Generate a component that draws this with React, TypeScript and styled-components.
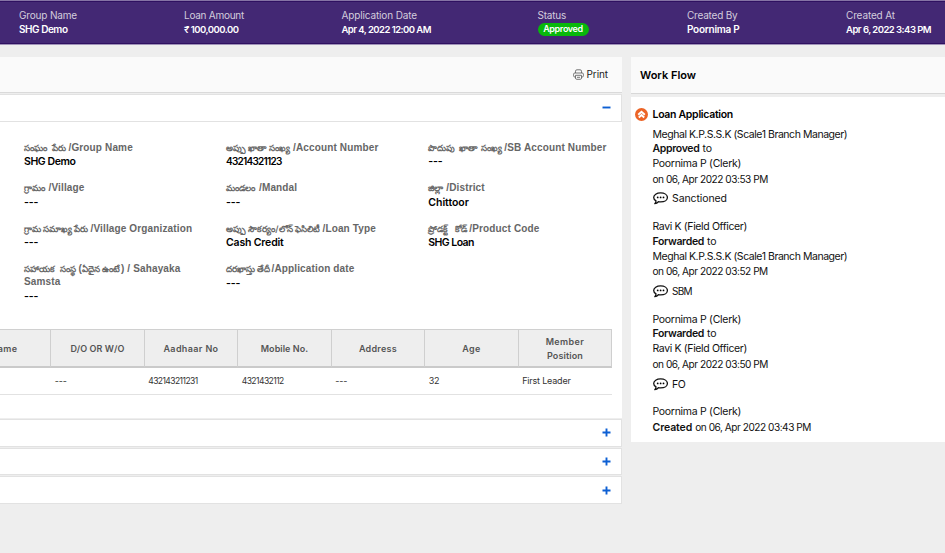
import React from 'react';
import styled, { createGlobalStyle } from 'styled-components';

const GlobalStyle = createGlobalStyle`
  * { box-sizing: border-box; }
  html, body { margin: 0; height: 100%; overflow: hidden; background: #eeeeee; }
  body { font-family: Inter, "Noto Sans", sans-serif; color: #111; }
`;

const Page = styled.div`
  width: 945px;
  height: 553px;
  overflow: hidden;
  background: #eeeeee;
`;

const Text = styled.span<{ $size?: number; $weight?: number; $spacing?: number; $color?: string }>`
  font-size: ${p => p.$size ?? 10}px;
  font-weight: ${p => p.$weight ?? 400};
  letter-spacing: ${p => p.$spacing ?? 0}px;
  color: ${p => p.$color ?? 'inherit'};
  white-space: nowrap;
`;

/* Summary header */
const Summary = styled.header`
  height: 45px;
  background: #432874;
  border-top: 1px solid #8573a5;
  border-bottom: 1px solid #a093b8;
  box-shadow: inset 0 1px #2f1061, inset 0 -1px #2f1061;
  display: grid;
  grid-template-columns: 165px 157.5px 196px 149.5px 159px 1fr;
  padding: 8px 0 0 19px;
  color: #fff;
`;

const SummaryItem = styled.div`
  display: flex;
  flex-direction: column;
  align-items: flex-start;
  line-height: 13.5px;
`;

const StatusPill = styled.span`
  height: 13px;
  width: 51px;
  border-radius: 7px;
  background: #08b80b;
  display: flex;
  align-items: center;
  justify-content: center;
`;

/* Columns */
const Columns = styled.div`
  display: flex;
  align-items: flex-start;
  gap: 9px;
  padding-top: 12px;
`;

const Main = styled.main`
  width: 622px;
`;

const Toolbar = styled.div`
  height: 36px;
  background: #fafafa;
  border-bottom: 1px solid #dadada;
  display: flex;
  align-items: center;
  justify-content: flex-end;
  gap: 2px;
  padding: 0 14px 1px 0;
  color: #222;
`;

const AccordionHead = styled.div`
  height: 27.7px;
  margin-top: 1px;
  background: #fff;
  border: 1px solid #e2e2e2;
  border-left: 0;
  display: flex;
  align-items: center;
  justify-content: flex-end;
  padding-right: 10px;
`;

const AccordionBody = styled.section`
  height: 296.3px;
  background: #fff;
  padding-top: 19.3px;
`;

const Fields = styled.div`
  display: grid;
  grid-template-columns: 202px 202.3px 190px;
  grid-auto-rows: 40.5px;
  padding-left: 24px;
  height: 188px;
`;

const Label = styled.div`
  font: bold 10px/13px "Liberation Sans", "Noto Sans", sans-serif;
  letter-spacing: 0.14px;
  color: #666;
  white-space: nowrap;
`;

const Telugu = styled.span<{ $width: number }>`
  display: inline-block;
  width: ${p => p.$width}px;
  padding-right: 2.5px;
  font-family: Inter, sans-serif;
  font-size: 8.7px;
  font-weight: 600;
  line-height: 12px;
  letter-spacing: 0;
  text-align-last: justify;
`;

const Value = styled.div`
  height: 15px;
  line-height: 15px;
  margin-top: 0.3px;
  color: #000;
  display: flex;
`;

/* Members table */
const Table = styled.div`
  display: grid;
  grid-template-columns: repeat(7, 93.5px);
  width: 655px;
  margin-left: -42.3px;
`;

const TableWrap = styled.div`
  overflow: hidden;
`;

const HeadCell = styled.div`
  height: 39px;
  background: #eee;
  border-top: 1px solid #d0d0d0;
  border-right: 1px solid #cfcfcf;
  border-bottom: 2px solid #cacaca;
  display: flex;
  flex-direction: column;
  align-items: center;
  justify-content: center;
  padding-top: 2px;
  line-height: 14px;
  color: #555;
`;

const Cell = styled.div`
  height: 27px;
  border-bottom: 1px solid #e2e2e2;
  padding-left: 3.5px;
  line-height: 21px;
  color: #333;
`;

/* Workflow */
const Side = styled.aside`
  width: 314px;
`;

const SideHead = styled.div`
  height: 37px;
  background: #fafafa;
  border-bottom: 1px solid #d8d8d8;
  padding-left: 9px;
  line-height: 33px;
  color: #000;
`;

const SideBody = styled.section`
  height: 345px;
  margin-top: 3px;
  background: #fff;
  padding-top: 10px;
`;

const FlowTitle = styled.div`
  display: flex;
  align-items: center;
  gap: 4.5px;
  height: 15px;
  padding-left: 4px;
  color: #000;
`;

const Steps = styled.div`
  padding-top: 5.7px;
`;

const Step = styled.div`
  padding: 0 0 14.3px 21.5px;
`;

const Line = styled.div`
  height: 14.7px;
  line-height: 14.7px;
  display: flex;
  align-items: baseline;
  gap: 3px;
`;

const Comment = styled.div`
  display: flex;
  align-items: center;
  gap: 4.5px;
  height: 14px;
  margin-top: 5.5px;
`;

const PrinterIcon = () => (
  <svg width="11" height="11" viewBox="0 0 11 11" fill="none" stroke="#666" strokeWidth="0.9">
    <path d="M2.5 4V2.2Q2.5.8 3.9.8H7.1Q8.5.8 8.5 2.2V4M2.5 8H1.8Q.6 8 .6 6.8V5.2Q.6 4 1.8 4H9.2Q10.4 4 10.4 5.2V6.8Q10.4 8 9.2 8H8.5M2.5 6.3H8.5V9.1Q8.5 10.3 7.3 10.3H3.7Q2.5 10.3 2.5 9.1ZM4 8.3H7" />
  </svg>
);

const ToggleIcon = ({ open }: { open?: boolean }) => (
  <svg width="9" height="9" viewBox="0 0 9 9" stroke="#0d5fd3" strokeWidth="1.9">
    <path d={open ? 'M.5 4.5H8.5' : 'M.5 4.5H8.5M4.5.5V8.5'} />
  </svg>
);

const FlowIcon = () => (
  <svg width="13" height="13" viewBox="0 0 13 13">
    <circle cx="6.5" cy="6.5" r="6.5" fill="#ec6426" />
    <path d="M3.2 6.7 6.5 3.8 9.8 6.7M3.8 9.5 6.5 7.1 9.2 9.5" fill="none" stroke="#fff" strokeWidth="1.9" />
  </svg>
);

const CommentIcon = () => (
  <svg width="15" height="13" viewBox="0 0 15 13">
    <path d="M3 8.9Q.7 7.5.7 5.4C.7 2.8 3.7.9 7.6.9S14.4 2.8 14.4 5.4 11.5 9.9 7.6 9.9Q6.4 9.9 5.4 9.7 3.9 11.4 1.8 11.6 3 10.3 3 8.9Z" fill="#fff" stroke="#111" strokeWidth="1.3" strokeLinejoin="round" />
    <circle cx="4.7" cy="5.4" r=".9" />
    <circle cx="7.6" cy="5.4" r=".9" />
    <circle cx="10.5" cy="5.4" r=".9" />
  </svg>
);

type Piece = { text: string; ls: number; size?: number; bold?: boolean };

const summary: { label: string; ls: number; value: string; vls: number; size?: number; pill?: boolean }[] = [
  { label: 'Group Name', ls: -0.17, value: 'SHG Demo', vls: -0.46 },
  { label: 'Loan Amount', ls: -0.26, value: '₹ 100,000.00', vls: -0.5, size: 9.5 },
  { label: 'Application Date', ls: -0.14, value: 'Apr 4, 2022 12:00 AM', vls: -0.54, size: 9.5 },
  { label: 'Status', ls: -0.22, value: 'Approved', vls: -0.35, size: 9, pill: true },
  { label: 'Created By', ls: -0.21, value: 'Poornima P', vls: -0.26 },
  { label: 'Created At', ls: -0.14, value: 'Apr 6, 2022 3:43 PM', vls: -0.53, size: 9.5 },
];

type Field = { te: [string, number][]; en: string[]; value?: Piece };
const fields: Field[] = [
  { te: [['సంఘం పేరు', 44.5]], en: ['/Group Name'], value: { text: 'SHG Demo', ls: -0.41 } },
  { te: [['అప్పు ఖాతా సంఖ్య', 67]], en: ['/Account Number'], value: { text: '43214321123', ls: -0.75, size: 10 } },
  { te: [['పొదుపు ఖాతా సంఖ్య', 76]], en: ['/SB Account Number'] },
  { te: [['గ్రామం', 24.5]], en: ['/Village'] },
  { te: [['మండలం', 33]], en: ['/Mandal'] },
  { te: [['జిల్లా', 18]], en: ['/District'], value: { text: 'Chittoor', ls: -0.04 } },
  { te: [['గ్రామ సమాఖ్య పేరు', 66.5]], en: ['/Village Organization'] },
  { te: [['అప్పు సౌకర్యం/లోన్ ఫెసిలిటీ', 96.5]], en: ['/Loan Type'], value: { text: 'Cash Credit', ls: -0.17 } },
  { te: [['ప్రోడక్ట్ కోడ్', 41]], en: ['/Product Code'], value: { text: 'SHG Loan', ls: -0.55 } },
  { te: [['సహాయక సంస్థ', 54.5], ['ఏదైన ఉంటే', 39]], en: ['(', ') / Sahayaka', 'Samsta'] },
  { te: [['దరఖాస్తు తేదీ', 45.5]], en: ['/Application date'] },
];

const heads: [string, number][][] = [
  [['Name', 0.3]],
  [['D/O OR W/O', 0.09]],
  [['Aadhaar No', 0.37]],
  [['Mobile No.', 0.05]],
  [['Address', 0.25]],
  [['Age', 0.38]],
  [['Member', 0.38], ['Position', 0.12]],
];

const cells: [string, number, number?][] = [
  ['', 0],
  ['---', -0.14],
  ['432143211231', -0.56, 8.5],
  ['4321432112', -0.54, 8.5],
  ['---', -0.14],
  ['32', -0.25],
  ['First Leader', -0.19],
];

const b = (text: string, ls: number): Piece => ({ text, ls, bold: true });
const t = (text: string, ls: number, size?: number): Piece => ({ text, ls, size });
const meghal = t('Meghal K.P.S.S.K (Scale1 Branch Manager)', -0.45);
const poornima = t('Poornima P (Clerk)', -0.29);
const ravi = t('Ravi K (Field Officer)', -0.36);
const on = (time: string) => t(`on 06, Apr 2022 ${time} PM`, -0.47, 10.1);

const steps: { lines: Piece[][]; note?: Piece }[] = [
  { lines: [[meghal], [b('Approved', -0.33), t('to', -0.07)], [poornima], [on('03:53')]], note: t('Sanctioned', -0.09) },
  { lines: [[ravi], [b('Forwarded', -0.34), t('to', -0.07)], [meghal], [on('03:52')]], note: t('SBM', -0.7, 10) },
  { lines: [[poornima], [b('Forwarded', -0.34), t('to', -0.07)], [ravi], [on('03:50')]], note: t('FO', -0.5) },
  { lines: [[poornima], [b('Created', -0.1), on('03:43')]] },
];

const FieldLabel = ({ te, en }: Field) =>
  te.length === 1 ? (
    <Label><Telugu $width={te[0][1]}>{te[0][0]}</Telugu>{en[0]}</Label>
  ) : (
    <Label>
      <Telugu $width={te[0][1]}>{te[0][0]}</Telugu>{en[0]}
      <Telugu $width={te[1][1]}>{te[1][0]}</Telugu>{en[1]}<br />{en[2]}
    </Label>
  );

export default function App() {
  return (
    <Page>
      <GlobalStyle />
      <Summary>
        {summary.map(s => (
          <SummaryItem key={s.label}>
            <Text $spacing={s.ls} $color="#d3cddd">{s.label}</Text>
            {s.pill ? (
              <StatusPill><Text $size={s.size} $weight={600} $spacing={s.vls}>{s.value}</Text></StatusPill>
            ) : (
              <Text $size={s.size} $weight={600} $spacing={s.vls}>{s.value}</Text>
            )}
          </SummaryItem>
        ))}
      </Summary>
      <Columns>
        <Main>
          <Toolbar><PrinterIcon /><Text $spacing={-0.08}>Print</Text></Toolbar>
          <AccordionHead><ToggleIcon open /></AccordionHead>
          <AccordionBody>
            <Fields>
              {fields.map(f => (
                <div key={f.en[0] + f.te[0][0]}>
                  <FieldLabel {...f} />
                  <Value>
                    <Text $size={f.value?.size ?? 10.5} $weight={600} $spacing={f.value?.ls ?? -0.1}>
                      {f.value?.text ?? '---'}
                    </Text>
                  </Value>
                </div>
              ))}
            </Fields>
            <TableWrap>
              <Table>
                {heads.map(lines => (
                  <HeadCell key={lines[0][0]}>
                    {lines.map(([text, ls]) => (
                      <Text key={text} $size={9} $weight={600} $spacing={ls}>{text}</Text>
                    ))}
                  </HeadCell>
                ))}
                {cells.map(([text, ls, size], i) => (
                  <Cell key={i}><Text $size={size ?? 9} $spacing={ls}>{text}</Text></Cell>
                ))}
              </Table>
            </TableWrap>
          </AccordionBody>
          <AccordionHead><ToggleIcon /></AccordionHead>
          <AccordionHead><ToggleIcon /></AccordionHead>
          <AccordionHead><ToggleIcon /></AccordionHead>
        </Main>
        <Side>
          <SideHead><Text $size={11} $weight={600}>Work Flow</Text></SideHead>
          <SideBody>
            <FlowTitle><FlowIcon /><Text $size={10.5} $weight={600} $spacing={-0.3}>Loan Application</Text></FlowTitle>
            <Steps>
              {steps.map((s, i) => (
                <Step key={i}>
                  {s.lines.map((line, j) => (
                    <Line key={j}>
                      {line.map(p => (
                        <Text key={p.text} $size={p.size ?? 10.5} $weight={p.bold ? 600 : 400} $spacing={p.ls}>{p.text}</Text>
                      ))}
                    </Line>
                  ))}
                  {s.note && (
                    <Comment>
                      <CommentIcon />
                      <Text $size={s.note.size ?? 10.5} $spacing={s.note.ls}>{s.note.text}</Text>
                    </Comment>
                  )}
                </Step>
              ))}
            </Steps>
          </SideBody>
        </Side>
      </Columns>
    </Page>
  );
}
